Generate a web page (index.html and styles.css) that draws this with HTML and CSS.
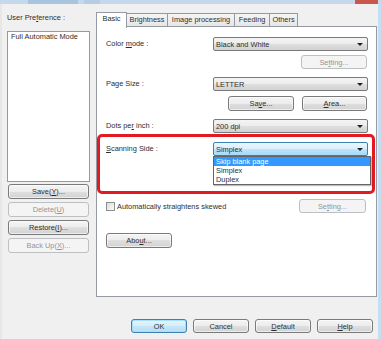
FILE: index.html
```html
<!DOCTYPE html>
<html lang="en">
<head>
    <meta charset="UTF-8">
    <meta name="viewport" content="width=device-width, initial-scale=1.0">
    <title>Scanner settings</title>
    <link rel="stylesheet" href="styles.css">
</head>
<body>
<div class="window">
    <div class="titlebar">
        <span class="tb-a"></span>
        <span class="tb-b"></span>
        <span class="tb-close"></span>
    </div>

    <div class="client">
        <div class="main">
            <!-- Left: user preference list -->
            <div class="prefs">
                <div class="prefs-label">User Pre<u>f</u>erence :</div>
                <div class="pref-list">
                    <div class="pref-item">Full Automatic Mode</div>
                </div>
                <button class="btn pref-btn first">Save(<u>Y</u>)...</button>
                <button class="btn pref-btn" disabled>Delete(<u>U</u>)</button>
                <button class="btn pref-btn">Restore(<u>I</u>)...</button>
                <button class="btn pref-btn" disabled>Back Up(<u>X</u>)...</button>
            </div>

            <!-- Right: tabs -->
            <div class="tabs">
                <div class="tab-strip">
                    <div class="tab active tab-basic">Basic</div>
                    <div class="tab tab-bright">Brightness</div>
                    <div class="tab tab-image">Image processing</div>
                    <div class="tab tab-feed">Feeding</div>
                    <div class="tab tab-other">Others</div>
                </div>

                <div class="panel">
                    <div class="row">
                        <div class="label">Color <u>m</u>ode :</div>
                        <div class="control">
                            <div class="select">Black and White<span class="arrow"></span></div>
                            <div class="btn-row">
                                <button class="btn small" disabled>Se<u>t</u>ting...</button>
                            </div>
                        </div>
                    </div>

                    <div class="row gap-top">
                        <div class="label">Page Size :</div>
                        <div class="control wide-gap">
                            <div class="select">LETTER<span class="arrow"></span></div>
                            <div class="btn-row">
                                <button class="btn small tall">Sa<u>v</u>e...</button>
                                <button class="btn small tall"><u>A</u>rea...</button>
                            </div>
                        </div>
                    </div>

                    <div class="row gap-top">
                        <div class="label">Dots pe<u>r</u> inch :</div>
                        <div class="control">
                            <div class="select">200 dpi<span class="arrow"></span></div>
                        </div>
                    </div>

                    <div class="highlight">
                        <div class="row">
                            <div class="label"><u>S</u>canning Side :</div>
                            <div class="control no-gap">
                                <div class="select hot">Simplex<span class="arrow"></span></div>
                                <div class="dropdown">
                                    <div class="option sel">Skip blank page</div>
                                    <div class="option">Simplex</div>
                                    <div class="option">Duplex</div>
                                </div>
                            </div>
                        </div>
                    </div>

                    <div class="check-row">
                        <label class="check"><span class="box"></span>Automatically straightens skewed</label>
                        <button class="btn small setting2" disabled>Se<u>t</u>ting...</button>
                    </div>

                    <button class="btn small tall about">Abo<u>u</u>t...</button>
                </div>
            </div>
        </div>

        <div class="footer">
            <button class="btn foot default">OK</button>
            <button class="btn foot">Cancel</button>
            <button class="btn foot"><u>D</u>efault</button>
            <button class="btn foot"><u>H</u>elp</button>
        </div>
    </div>
</div>
</body>
</html>
```

FILE: styles.css
```css
body {
    margin: 0;
    font-family: "Liberation Sans", Arial, sans-serif;
    font-size: 7.4px;
    color: #2e2e2e;
    background-color: #f0f0f0;
}

.window {
    width: 381px;
    height: 339px;
    display: flex;
    flex-direction: column;
    background-color: #f0f0f0;
}

.titlebar {
    height: 4px;
    display: flex;
    background-color: #c5d9ec;
}

.tb-a {
    width: 50px;
    margin-left: 28px;
    background-color: #a9c4df;
}

.tb-b {
    width: 16px;
    margin-left: 6px;
    background-color: #b6cde5;
}

.tb-close {
    width: 23px;
    margin-left: auto;
    margin-right: 3px;
    background-color: #c9574e;
}

.client {
    flex: 1;
    border-left: 2px solid #e7e7e7;
    border-right: 3px solid #c3dff2;
    display: flex;
    flex-direction: column;
}

.main {
    display: flex;
    padding: 8px 1px 0 5px;
}

/* left column */
.prefs {
    width: 83px;
    margin-right: 6px;
    display: flex;
    flex-direction: column;
}

.prefs-label {
    height: 11px;
    line-height: 11px;
}

.pref-list {
    margin-top: 8px;
    height: 151px;
    box-sizing: border-box;
    border: 1px solid #959aa2;
    background-color: #fff;
    padding: 0 3px;
}

.pref-item {
    line-height: 10px;
}

.btn {
    box-sizing: border-box;
    height: 14px;
    padding: 0;
    font: inherit;
    color: #2e2e2e;
    border: 1px solid #7a7a7a;
    border-radius: 3px;
    background: linear-gradient(#f4f4f4, #ececec 50%, #dfdfdf 50%, #d2d2d2);
    box-shadow: inset 0 0 0 1px rgba(255, 255, 255, 0.6);
}

.btn:disabled {
    border-color: #bcc0c3;
    background: #f4f4f4;
    color: #959595;
    box-shadow: none;
}

.pref-btn {
    width: 81px;
    height: 15px;
    margin-left: 1px;
    margin-top: 3px;
}

.pref-btn.first {
    margin-top: 2px;
}

/* tabs */
.tabs {
    width: 281px;
    display: flex;
    flex-direction: column;
}

.tab-strip {
    height: 14px;
    display: flex;
    align-items: flex-end;
}

.tab {
    box-sizing: border-box;
    height: 13px;
    line-height: 11px;
    text-align: center;
    border: 1px solid #959aa2;
    border-bottom: none;
    margin-right: -1px;
    background: linear-gradient(#f5f5f5, #e6e6e6);
}

.tab.active {
    height: 16px;
    line-height: 12px;
    margin-bottom: -2px;
    background: #fff;
    position: relative;
    z-index: 1;
}

.tab-basic { width: 31px; }
.tab-bright { width: 42px; }
.tab-image { width: 68px; }
.tab-feed { width: 36px; }
.tab-other { width: 29px; }

.panel {
    height: 271px;
    box-sizing: border-box;
    border: 1px solid #959aa2;
    background-color: #fff;
    padding: 10px 8px 0 9px;
}

.row {
    display: flex;
    align-items: flex-start;
}

.gap-top {
    margin-top: 8px;
}

.label {
    width: 107px;
    line-height: 14px;
}

.control {
    width: 155px;
    display: flex;
    flex-direction: column;
    gap: 4px;
}

.control.wide-gap {
    gap: 5px;
}

.control.no-gap {
    gap: 0;
}

.select {
    box-sizing: border-box;
    height: 14px;
    display: flex;
    align-items: center;
    padding: 0 4px 0 2px;
    border: 1px solid #7a7a7a;
    border-radius: 2px;
    background: linear-gradient(#f4f4f4, #ececec 50%, #dfdfdf 50%, #d2d2d2);
}

.select.hot {
    border-color: #3c7fb1;
    background: linear-gradient(#eaf6fd, #d9f0fc 50%, #bee6fd 50%, #a7d9f5);
}

.arrow {
    margin-left: auto;
    width: 0;
    height: 0;
    border-left: 3px solid transparent;
    border-right: 3px solid transparent;
    border-top: 3px solid #222;
}

.btn-row {
    display: flex;
    justify-content: flex-end;
    gap: 7px;
}

.btn.small {
    width: 66px;
    margin-right: 1px;
}

.btn.tall {
    height: 15px;
}

.btn-row .btn.tall:last-child {
    width: 65px;
}

/* red highlight round scanning side */
.highlight {
    margin: 1px -7px 0 -9px;
    border: 3px solid #e21b23;
    border-radius: 5px;
    padding: 5px 4px 6px 6px;
}

.dropdown {
    width: 156px;
    border: 1px solid #646464;
    background-color: #fff;
    box-shadow: 1px 1px 1px rgba(0, 0, 0, 0.25);
}

.option {
    line-height: 9px;
    padding-left: 2px;
}

.option.sel {
    background-color: #3399ff;
    color: #fff;
}

.check-row {
    margin-top: 5px;
    display: flex;
    align-items: center;
    justify-content: space-between;
}

.check {
    display: flex;
    align-items: center;
}

.box {
    box-sizing: border-box;
    width: 9px;
    height: 9px;
    margin-right: 2px;
    border: 1px solid #8e8f8f;
    background: linear-gradient(135deg, #dcdcdc, #fbfbfb);
}

.btn.setting2 {
    width: 67px;
    margin-right: 2px;
}

.btn.about {
    display: block;
    margin-top: 20px;
}

/* bottom buttons */
.footer {
    display: flex;
    justify-content: flex-end;
    gap: 6px;
    padding: 22px 5px 0 0;
}

.btn.foot {
    width: 56px;
}

.btn.default {
    border-color: #3c7fb1;
    background: linear-gradient(#e5f4fc, #d4edfb 50%, #c4e5f6 50%, #b6dff5);
    box-shadow: inset 0 0 0 1px #a6e0fb;
}
```
